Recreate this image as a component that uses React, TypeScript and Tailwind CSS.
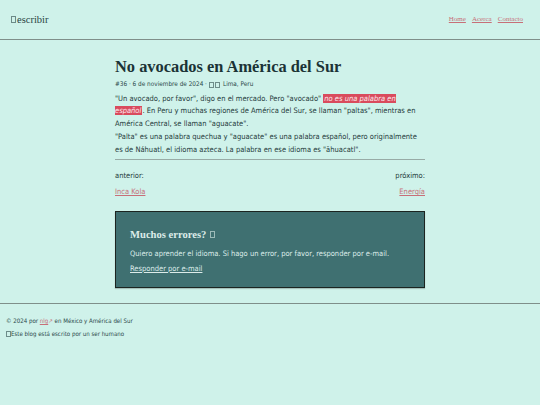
import React from 'react';

// Cajita para los emojis que no tienen fuente (se ven como "tofu")
function Tofu({ className = '' }: { className?: string }) {
  return (
    <span
      className={`inline-block align-[-1px] border border-current opacity-60 ${className}`}
    />
  );
}

const sans = 'font-["DejaVu_Sans_Condensed","DejaVu_Sans",Verdana,sans-serif] font-stretch-condensed';
const serif = 'font-["Liberation_Serif","Times_New_Roman",serif]';

export default function App() {
  return (
    <div className="min-h-[405px] bg-[#cff2ea] text-[#1f3a3b]">
      {/* Header */}
      <header className="h-[40px] flex items-center justify-between px-[11px] border-b border-[#7f8f8a]">
        <div className={`${serif} text-[10.5px] text-[#2a4444] flex items-center`}>
          <Tofu className="w-[5px] h-[7px] mr-[1px]" />
          escribir
        </div>
        <nav className={`${serif} text-[7px] flex gap-[6px] pr-[6px]`}>
          <a className="text-[#c76f78] underline">Home</a>
          <a className="text-[#c76f78] underline">Acerca</a>
          <a className="text-[#c76f78] underline">Contacto</a>
        </nav>
      </header>

      <main className="w-[310px] mx-auto pt-[17px]">
        <h1 className={`${serif} font-bold text-[16.4px] leading-[20px] text-[#1b3336]`}>
          No avocados en América del Sur
        </h1>
        <div className={`${sans} text-[6.4px] mt-[3px] text-[#2d4a4a] flex items-center`}>
          #36 · 6 de noviembre de 2024 ·{' '}
          <Tofu className="w-[5px] h-[6px] ml-[2px]" />
          <Tofu className="w-[5px] h-[6px] ml-[1px] mr-[3px]" />
          Lima, Peru
        </div>

        <p className={`${sans} text-[7.5px] leading-[12.5px] mt-[3px]`}>
          "Un avocado, por favor", digo en el mercado. Pero "avocado"{' '}
          <em className="bg-[#d94b5d] text-[#fbe9ec] px-[1px]">no es una palabra en español</em>.
          En Peru y muchas regiones de América del Sur, se llaman "paltas", mientras en América
          Central, se llaman "aguacate".
        </p>
        <p className={`${sans} text-[7.5px] leading-[12.5px] mt-[1px]`}>
          "Palta" es una palabra quechua y "aguacate" es una palabra español, pero originalmente es
          de Náhuatl, el idioma azteca. La palabra en ese idioma es "āhuacatl".
        </p>

        <hr className="mt-[3px] border-0 border-t border-[#98aba6]" />

        <div className={`${sans} text-[7.5px] flex justify-between mt-[10px]`}>
          <div className="flex flex-col gap-[5px]">
            <span>anterior:</span>
            <a className="text-[#c76f78] underline">Inca Kola</a>
          </div>
          <div className="flex flex-col items-end gap-[5px]">
            <span>próximo:</span>
            <a className="text-[#c76f78] underline">Energía</a>
          </div>
        </div>

        {/* Caja de errores */}
        <div className="mt-[13px] bg-[#3f7071] border-[1.5px] border-[#1b2420] px-[14px] pt-[15px] pb-[13px] text-[#dcecea] shadow-[0_1px_1px_rgba(0,0,0,0.2)]">
          <h2 className={`${serif} font-bold text-[10.6px] flex items-center`}>
            Muchos errores?
            <Tofu className="w-[5px] h-[7px] ml-[4px]" />
          </h2>
          <p className={`${sans} text-[7.5px] mt-[5px]`}>
            Quiero aprender el idioma. Si hago un error, por favor, responder por e-mail.
          </p>
          <a className={`${sans} text-[7.5px] underline block mt-[4px]`}>Responder por e-mail</a>
        </div>
      </main>

      <footer className={`${sans} mt-[15px] border-t border-[#7f8f8a] px-[6px] pt-[12px] text-[6.1px] text-[#2d4a4a]`}>
        <div>
          © 2024 por <a className="text-[#c76f78] underline">nlg</a>
          <span className="text-[#c76f78]">↗</span> en México y América del Sur
        </div>
        <div className="mt-[4px] flex items-center">
          <Tofu className="w-[5px] h-[6px]" />
          Este blog está escrito por un ser humano
        </div>
      </footer>
    </div>
  );
}
